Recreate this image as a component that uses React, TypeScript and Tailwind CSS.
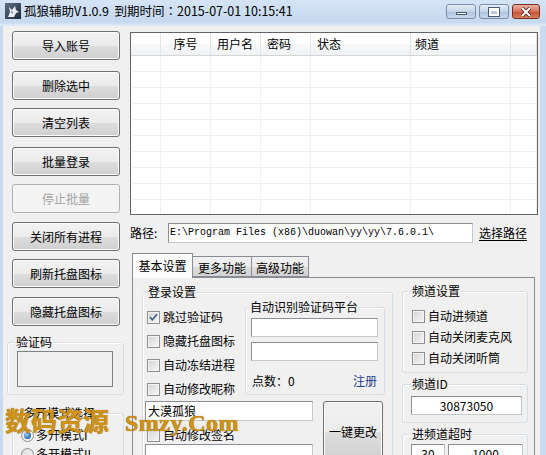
import React from "react";

const btnNormal =
  "flex shrink-0 items-center justify-center rounded-[3px] border border-[#707070] bg-[linear-gradient(to_bottom,#f2f2f2_0%,#ebebeb_50%,#dddddd_51%,#cfcfcf_100%)] shadow-[inset_0_0_0_1px_#fcfcfc] text-black";
const btnDisabled =
  "flex shrink-0 items-center justify-center rounded-[3px] border border-[#adb2b5] bg-[#f4f4f4] text-[#a3a3a3]";

function Btn({ label, disabled, cls }: { label: string; disabled?: boolean; cls: string }) {
  return <div className={`${disabled ? btnDisabled : btnNormal} ${cls}`}>{label}</div>;
}

function Group({
  label,
  cls,
  labelCls,
  children,
}: {
  label: string;
  cls: string;
  labelCls: string;
  children?: React.ReactNode;
}) {
  return (
    <div className={`relative shrink-0 rounded-[3px] border border-[#d5dfe5] shadow-[inset_1px_1px_0_#ffffff] ${cls}`}>
      <span className={`absolute -top-[8px] bg-[#f0f0f0] px-[1px] leading-[14px] ${labelCls}`}>{label}</span>
      {children}
    </div>
  );
}

function Check({ checked }: { checked?: boolean }) {
  return (
    <span className="flex h-[13px] w-[13px] shrink-0 items-center justify-center border border-[#8e8f8f] bg-[linear-gradient(135deg,#d4d4d4,#f6f6f6)] shadow-[inset_0_0_0_1px_#f4f4f4]">
      {checked && (
        <svg width="9" height="9" viewBox="0 0 9 9">
          <path d="M1 4.2 L3.4 6.8 L8 1.2" stroke="#4a5e86" strokeWidth="1.7" fill="none" />
        </svg>
      )}
    </span>
  );
}

function CheckRow({ label, checked, cls }: { label: string; checked?: boolean; cls: string }) {
  return (
    <div className={`flex shrink-0 items-center gap-[3px] ${cls}`}>
      <Check checked={checked} />
      <span className="leading-none">{label}</span>
    </div>
  );
}

function Radio({ checked }: { checked?: boolean }) {
  return (
    <span className="flex h-[13px] w-[13px] shrink-0 items-center justify-center rounded-full border border-[#8e8f8f] bg-[linear-gradient(135deg,#dcdcdc,#fafafa)]">
      {checked && (
        <span className="h-[7px] w-[7px] rounded-full bg-[radial-gradient(circle_at_35%_35%,#9fd0f6,#2a6aa8_70%,#1c4f80)]" />
      )}
    </span>
  );
}

const cols = [30, 50, 50, 50, 100, 100, 26];
const heads = ["", "序号", "用户名", "密码", "状态", "频道", ""];

function Table() {
  return (
    <div className="mt-[6px] h-[183px] w-[408px] shrink-0 overflow-hidden border border-[#646464] bg-white">
      <div className="flex h-[23px] border-b border-[#d5d5d5] bg-[linear-gradient(to_bottom,#ffffff_0%,#ffffff_45%,#f6f7f9_55%,#f1f2f4_100%)]">
        {cols.map((w, i) => (
          <div
            key={i}
            style={{ width: w }}
            className={`flex h-full shrink-0 items-center border-r border-[#e2e3e5] ${
              i === 1 ? "justify-center" : i === 5 ? "pl-[4px]" : "pl-[6px]"
            }`}
          >
            {heads[i]}
          </div>
        ))}
      </div>
      {Array.from({ length: 10 }).map((_, r) => (
        <div key={r} className="flex h-[16px] border-b border-[#f0f0f0]">
          {cols.map((w, i) => (
            <div key={i} style={{ width: w }} className="h-full shrink-0 border-r border-[#f0f0f0]" />
          ))}
        </div>
      ))}
    </div>
  );
}

function WolfIcon() {
  return (
    <svg width="16" height="16" viewBox="0 0 16 16" className="ml-[5px] mt-[3px] shrink-0">
      <defs>
        <linearGradient id="wg" x1="0" y1="0" x2="1" y2="1">
          <stop offset="0" stopColor="#5d6f86" />
          <stop offset="1" stopColor="#1f2a38" />
        </linearGradient>
      </defs>
      <rect x="0" y="0" width="16" height="16" fill="url(#wg)" />
      <path d="M3 14 L5 9 L4 4 L7 7 L10 3 L11 7 L14 9 L11 10 L9 14 Z" fill="#e8edf3" />
      <path d="M6 8 L8 9 L7 11 Z" fill="#556477" />
    </svg>
  );
}

function TitleBar() {
  return (
    <div className="flex h-[26px] shrink-0 bg-[linear-gradient(to_bottom,#d5e4f5,#c6d9ef_85%,#e4edf7)]">
      <WolfIcon />
      <span className="ml-[3px] mt-[4px] whitespace-pre font-['Noto_Sans_CJK_JP',sans-serif] text-[12.5px] leading-[14px]">
        孤狼辅助V1.0.9  到期时间：2015-07-01 10:15:41
      </span>
      <div className="ml-auto mr-[6px] mt-[4px] flex h-[15px] gap-[3px]">
        <div className="flex h-full w-[30px] items-end justify-center rounded-[3px] border border-[#7d8fa8] bg-[linear-gradient(to_bottom,#e6eef8,#c3d4e8_50%,#aec3dd_51%,#c9d9ec)] pb-[3px]">
          <span className="h-[3px] w-[11px] border border-[#4b5a70] bg-white" />
        </div>
        <div className="flex h-full w-[30px] items-center justify-center rounded-[3px] border border-[#7d8fa8] bg-[linear-gradient(to_bottom,#e6eef8,#c3d4e8_50%,#aec3dd_51%,#c9d9ec)]">
          <span className="h-[8px] w-[10px] border-[2px] border-t-[3px] border-[#ffffff] shadow-[0_0_0_1px_#4b5a70]" />
        </div>
        <div className="flex h-full w-[28px] items-center justify-center rounded-[3px] border border-[#7a2e22] bg-[linear-gradient(to_bottom,#eab1a3,#d9705b_50%,#c74d33_51%,#d67f5d)]">
          <svg width="12" height="10" viewBox="0 0 12 10">
            <path d="M2 1 L10 9 M10 1 L2 9" stroke="#3b1a14" strokeWidth="3.4" />
            <path d="M2 1 L10 9 M10 1 L2 9" stroke="#ffffff" strokeWidth="2" />
          </svg>
        </div>
      </div>
    </div>
  );
}

const inputCls = "shrink-0 border border-[#8d8f94] border-r-[#c4c7cc] border-b-[#c4c7cc] bg-white";

export default function App() {
  return (
    <div className="relative h-[455px] w-[546px] overflow-hidden bg-[#f0f0f0] font-['Noto_Sans_CJK_SC',sans-serif] text-[12px] leading-none text-black">
      <TitleBar />
      <div className="flex h-[429px] border-l-[3px] border-r-[6px] border-l-[#c9dbf0] border-r-[#c9dbf0]">
        {/* Left column */}
        <div className="flex w-[127px] shrink-0 flex-col">
          <Btn label="导入账号" cls="ml-[9px] mt-[5px] h-[29px] w-[108px]" />
          <Btn label="删除选中" cls="ml-[9px] mt-[11px] h-[29px] w-[108px]" />
          <Btn label="清空列表" cls="ml-[9px] mt-[8px] h-[29px] w-[108px]" />
          <Btn label="批量登录" cls="ml-[9px] mt-[10px] h-[29px] w-[108px]" />
          <Btn label="停止批量" disabled cls="ml-[9px] mt-[8px] h-[29px] w-[108px]" />
          <Btn label="关闭所有进程" cls="ml-[9px] mt-[9px] h-[29px] w-[108px]" />
          <Btn label="刷新托盘图标" cls="ml-[9px] mt-[8px] h-[29px] w-[108px]" />
          <Btn label="隐藏托盘图标" cls="ml-[9px] mt-[9px] h-[29px] w-[108px]" />
          <Group label="验证码" cls="ml-[4px] mt-[16px] h-[53px] w-[117px]" labelCls="left-[7px]">
            <div className="ml-[9px] mt-[8px] h-[36px] w-[96px] border border-[#7f8287] bg-[#f0f0f0]" />
          </Group>
          <Group label="多开模式选择" cls="ml-[9px] mt-[18px] h-[70px] w-[112px]" labelCls="left-[9px]">
            <div className="flex flex-col gap-[5px] pl-[8px] pt-[14px]">
              <div className="flex h-[14px] items-center gap-[2px]">
                <Radio checked />
                <span>多开模式I</span>
              </div>
              <div className="flex h-[14px] items-center gap-[2px]">
                <Radio />
                <span>多开模式II</span>
              </div>
            </div>
          </Group>
        </div>

        {/* Right column */}
        <div className="flex w-[410px] shrink-0 flex-col">
          <Table />
          <div className="mt-[8px] flex h-[20px] shrink-0 items-center">
            <span className="w-[38px]">路径:</span>
            <div className={`flex h-[20px] w-[305px] items-center pl-[1px] font-['Liberation_Mono',monospace] text-[10px] ${inputCls}`}>
              {"E:\\Program Files (x86)\\duowan\\yy\\yy\\7.6.0.1\\"}
            </div>
            <span className="ml-[6px] underline underline-offset-2">选择路径</span>
          </div>

          {/* Tabs */}
          <div className="ml-[2px] mt-[10px] flex h-[24px] shrink-0 items-end">
            <div className="relative z-10 -mb-[1px] flex h-[25px] w-[61px] justify-center border border-b-0 border-[#898c95] bg-[#fbfbfb] pt-[6px]">
              基本设置
            </div>
            <div className="flex h-[21px] w-[59px] justify-center border border-l-0 border-[#898c95] bg-[linear-gradient(to_bottom,#f2f2f2,#ebebeb_50%,#dddddd_51%,#d3d3d3)] pt-[5px]">
              更多功能
            </div>
            <div className="flex h-[21px] w-[57px] justify-center border border-l-0 border-[#898c95] bg-[linear-gradient(to_bottom,#f2f2f2,#ebebeb_50%,#dddddd_51%,#d3d3d3)] pt-[5px]">
              高级功能
            </div>
          </div>
          <div className="ml-[2px] flex h-[220px] w-[403px] shrink-0 border border-[#898c95] bg-[#f0f0f0] pl-[9px] pt-[14px]">
            {/* Login settings */}
            <Group label="登录设置" cls="h-[200px] w-[251px]" labelCls="left-[4px]">
              <div className="flex pl-[4px] pt-[14px]">
                <div className="flex w-[98px] shrink-0 flex-col gap-[4px]">
                  <CheckRow label="跳过验证码" checked cls="h-[20px]" />
                  <CheckRow label="隐藏托盘图标" cls="h-[20px]" />
                  <CheckRow label="自动冻结进程" cls="h-[20px]" />
                  <CheckRow label="自动修改昵称" cls="h-[20px]" />
                </div>
                <Group label="自动识别验证码平台" cls="h-[88px] w-[140px]" labelCls="left-[3px]">
                  <div className="flex flex-col pl-[5px] pr-[6px] pt-[10px]">
                    <div className={`h-[19px] w-[127px] ${inputCls}`} />
                    <div className={`mt-[5px] h-[19px] w-[127px] ${inputCls}`} />
                    <div className="mt-[13px] flex h-[14px] shrink-0 items-center justify-between pr-[1px]">
                      <span className="pl-[1px]">点数：0</span>
                      <span className="text-[#1e3d8f]">注册</span>
                    </div>
                  </div>
                </Group>
              </div>
              <div className="mt-[2px] flex pl-[2px]">
                <div className="flex w-[168px] shrink-0 flex-col">
                  <div className={`flex h-[20px] w-[168px] items-center pl-[2px] ${inputCls}`}>大漠孤狼</div>
                  <CheckRow label="自动修改签名" cls="mt-[5px] h-[18px] pl-[2px]" />
                  <div className={`h-[20px] w-[168px] ${inputCls}`} />
                </div>
                <Btn label="一键更改" cls="ml-[10px] h-[62px] w-[60px]" />
              </div>
            </Group>

            {/* Right side groups */}
            <div className="ml-[9px] flex w-[126px] shrink-0 flex-col">
              <Group label="频道设置" cls="-mt-[1px] h-[82px]" labelCls="left-[8px]">
                <div className="flex flex-col gap-[1px] pl-[9px] pt-[14px]">
                  <CheckRow label="自动进频道" cls="h-[20px]" />
                  <CheckRow label="自动关闭麦克风" cls="h-[20px]" />
                  <CheckRow label="自动关闭听筒" cls="h-[20px]" />
                </div>
              </Group>
              <Group label="频道ID" cls="mt-[11px] h-[39px]" labelCls="left-[8px]">
                <div className="pl-[8px] pt-[11px]">
                  <div className={`flex h-[19px] w-[111px] items-center justify-center ${inputCls}`}>30873050</div>
                </div>
              </Group>
              <Group label="进频道超时" cls="mt-[11px] h-[40px]" labelCls="left-[8px]">
                <div className="flex gap-[3px] pl-[8px] pt-[9px]">
                  <div className={`flex h-[20px] w-[34px] items-center justify-center ${inputCls}`}>30</div>
                  <div className={`flex h-[20px] w-[75px] items-center justify-center ${inputCls}`}>1000</div>
                </div>
              </Group>
            </div>
          </div>
        </div>
      </div>

      {/* Watermark overlay */}
      <div className="pointer-events-none absolute left-[5px] top-[406px] flex items-baseline whitespace-pre leading-[28px] text-[#cf9214] [text-shadow:0_0_1px_#7a4e08]">
        <span className="text-[26px] font-bold">数码资源</span>
        <span className="ml-[16px] font-['Liberation_Serif',serif] text-[24px] font-bold tracking-[0.5px]">Smzy.Com</span>
      </div>
    </div>
  );
}
